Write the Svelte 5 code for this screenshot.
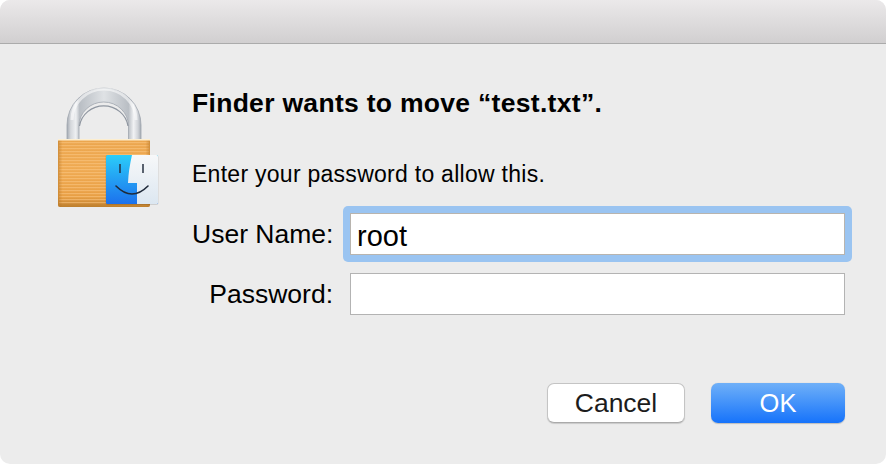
<script>
  const stripes = Array.from({ length: 21 }, (_, i) => 142 + i * 3);
</script>

<div class="dialog">
  <header class="titlebar"></header>
  <main class="content">
    <svg class="lock" width="110" height="130" viewBox="50 85 110 130" aria-hidden="true">
      <defs>
        <linearGradient id="shackle" gradientUnits="userSpaceOnUse" x1="67" x2="141" y1="0" y2="0">
          <stop offset="0" stop-color="#a4aab2" />
          <stop offset="0.05" stop-color="#d5d8dc" />
          <stop offset="0.12" stop-color="#eef0f2" />
          <stop offset="0.17" stop-color="#b9bec4" />
          <stop offset="0.5" stop-color="#dfe2e5" />
          <stop offset="0.83" stop-color="#b9bec4" />
          <stop offset="0.9" stop-color="#f1f2f4" />
          <stop offset="0.96" stop-color="#d0d3d8" />
          <stop offset="1" stop-color="#a4aab2" />
        </linearGradient>
        <linearGradient id="body" x1="0" x2="0" y1="0" y2="1">
          <stop offset="0" stop-color="#eba64e" />
          <stop offset="0.45" stop-color="#efaa52" />
          <stop offset="0.85" stop-color="#e89f44" />
          <stop offset="1" stop-color="#bd7f2e" />
        </linearGradient>
        <linearGradient id="edge" x1="0" x2="1" y1="0" y2="0">
          <stop offset="0" stop-color="#b9792a" stop-opacity="0.55" />
          <stop offset="0.05" stop-color="#b9792a" stop-opacity="0" />
          <stop offset="0.95" stop-color="#b9792a" stop-opacity="0" />
          <stop offset="1" stop-color="#b9792a" stop-opacity="0.55" />
        </linearGradient>
        <linearGradient id="fblue" x1="0" x2="0" y1="0" y2="1">
          <stop offset="0" stop-color="#2bcdf9" />
          <stop offset="1" stop-color="#1c71ed" />
        </linearGradient>
        <linearGradient id="fwhite" x1="0" x2="0" y1="0" y2="1">
          <stop offset="0" stop-color="#f7f8f9" />
          <stop offset="1" stop-color="#dce7f1" />
        </linearGradient>
        <clipPath id="fclip"><rect x="106" y="155" width="52" height="49" rx="1.5" /></clipPath>
      </defs>
      <path
        d="M67 140V125A37 37 0 0 1 141 125V140H128.5V126A24.75 24 0 0 0 79 126V140Z"
        fill="url(#shackle)"
        stroke="#a0a6ae"
        stroke-width="0.8"
      />
      <path d="M79.5 126A24.5 23.5 0 0 1 128 126" fill="none" stroke="#8f96a0" stroke-width="1.2" />
      <path d="M72 120A32 31 0 0 1 136 120" fill="none" stroke="#fff" stroke-opacity="0.55" stroke-width="3" />
      <rect x="58" y="139" width="92" height="68" rx="2" fill="url(#body)" />
      {#each stripes as y}
        <rect x="59" {y} width="90" height="1.2" fill="#fcc887" opacity="0.55" />
      {/each}
      <rect x="58" y="139" width="92" height="68" rx="2" fill="url(#edge)" />
      <rect x="58" y="139" width="92" height="1.5" fill="#fdeecf" />
      <rect x="105.5" y="155" width="53" height="50" rx="2" fill="#000" opacity="0.12" />
      <g clip-path="url(#fclip)">
        <rect x="106" y="155" width="52" height="49" fill="url(#fblue)" />
        <path d="M132 155H158V204H137V183H128Q128.5 170 132 155Z" fill="url(#fwhite)" />
      </g>
      <path d="M120 164v9M143 164v9" stroke="#263040" stroke-width="1.5" fill="none" />
      <path d="M116 186Q132 202 148 186" stroke="#1f2a3a" stroke-width="1.6" fill="none" stroke-linecap="round" />
    </svg>

    <div class="main">
      <h1>Finder wants to move “test.txt”.</h1>
      <p>Enter your password to allow this.</p>
      <div class="form">
        <span class="label">User Name:</span>
        <div class="ring"><div class="input">root</div></div>
        <span class="label">Password:</span>
        <div class="input"></div>
      </div>
      <div class="actions">
        <button class="cancel">Cancel</button>
        <button class="ok">OK</button>
      </div>
    </div>
  </main>
</div>

<style>
  :global(body) {
    margin: 0;
    background: #fff;
  }
  .dialog {
    width: 886px;
    height: 464px;
    background: #ececec;
    border-radius: 10px;
    overflow: hidden;
    display: flex;
    flex-direction: column;
    font-family: "Liberation Sans", Arial, sans-serif;
    color: #000;
  }
  .titlebar {
    height: 44px;
    flex: none;
    box-sizing: border-box;
    background: linear-gradient(#ebe9ea, #d1cfd0);
    border-bottom: 1px solid #ababab;
  }
  .content {
    flex: 1;
    display: flex;
    align-items: flex-start;
    padding: 0 41px 0 50px;
  }
  .lock {
    flex: none;
    margin-top: 41px;
    margin-right: 32px;
    display: block;
  }
  .main {
    flex: 1;
    min-width: 0;
  }
  h1 {
    margin: 45px 0 0;
    font-size: 26.5px;
    line-height: 28px;
    font-weight: 700;
    letter-spacing: 0.3px;
  }
  p {
    margin: 44px 0 0;
    font-size: 23px;
    line-height: 26px;
    letter-spacing: 0.27px;
  }
  .form {
    display: grid;
    grid-template-columns: 141px 495px;
    column-gap: 17px;
    row-gap: 18px;
    align-items: center;
    margin-top: 26px;
  }
  .label {
    font-size: 26.5px;
    line-height: 28px;
    text-align: right;
    white-space: nowrap;
  }
  .input {
    box-sizing: border-box;
    height: 42px;
    background: #fff;
    border: 1.5px solid #b3b3b3;
    font-size: 29px;
    line-height: 44px;
    padding-left: 6px;
  }
  .ring {
    margin: -7px;
    padding: 7px;
    background: #9ac4f1;
    border-radius: 5px;
  }
  .ring .input {
    border-color: #b8b4ae;
  }
  .actions {
    display: flex;
    justify-content: flex-end;
    gap: 26px;
    margin-top: 68px;
  }
  button {
    height: 40px;
    box-sizing: border-box;
    font-family: inherit;
    font-size: 26.5px;
    border-radius: 7px;
    padding: 0;
  }
  .cancel {
    width: 138px;
    background: #fff;
    color: #1c1c1c;
    border: 1px solid #c4c4c4;
    border-bottom-color: #aaa;
    box-shadow: 0 1px 1px rgba(0, 0, 0, 0.15);
  }
  .ok {
    width: 134px;
    color: #fff;
    border: none;
    font-size: 25.5px;
    background: linear-gradient(#6fb0f8, #1673fb);
    box-shadow: 0 0.5px 1px rgba(0, 0, 0, 0.2);
  }
</style>
